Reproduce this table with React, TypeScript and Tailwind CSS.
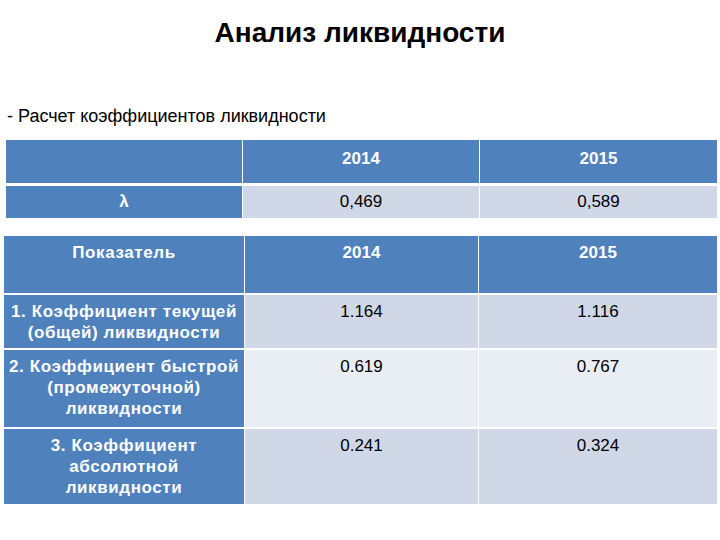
export default function App() {
  const rows = [
    { name: ["1. Коэффициент текущей", "(общей) ликвидности"], a: "1.164", b: "1.116", h: "h-[53px]", bg: "bg-[#d0d8e8]" },
    { name: ["2. Коэффициент быстрой", "(промежуточной)", "ликвидности"], a: "0.619", b: "0.767", h: "h-[77px]", bg: "bg-[#e9edf4]" },
    { name: ["3. Коэффициент", "абсолютной", "ликвидности"], a: "0.241", b: "0.324", h: "h-[75px]", bg: "bg-[#d0d8e8]" },
  ]

  return (
    <div className="w-[720px] h-[540px] bg-white font-['Liberation_Sans',Arial,sans-serif] text-black relative overflow-hidden">
      <h1 className="pt-[16px] text-center text-[28px] leading-[34px] font-bold">Анализ ликвидности</h1>

      <p className="mt-[55px] pl-[7px] text-[18px] leading-[22px]">- Расчет коэффициентов ликвидности</p>

      {/* first table */}
      <div className="mt-[13px] ml-[6px] w-[711px] grid grid-cols-[236px_236px_237px] gap-x-[1px] gap-y-[3px] text-[17px]">
        <div className="h-[43px] bg-[#4f81bd]" />
        <div className="h-[43px] bg-[#4f81bd] text-white font-bold text-center pt-[6px]">2014</div>
        <div className="h-[43px] bg-[#4f81bd] text-white font-bold text-center pt-[6px]">2015</div>
        <div className="h-[32px] bg-[#4f81bd] text-white font-bold flex items-center justify-center">λ</div>
        <div className="h-[32px] bg-[#d0d8e8] flex items-center justify-center">0,469</div>
        <div className="h-[32px] bg-[#d0d8e8] flex items-center justify-center">0,589</div>
      </div>

      {/* second table */}
      <div className="mt-[18px] ml-[4px] w-[713px] grid grid-cols-[240px_233px_238px] gap-x-[1px] gap-y-[2px] text-[17px] leading-[21px]">
        <div className="h-[57px] bg-[#4f81bd] text-white font-bold text-center pt-[6px] tracking-[0.6px]">Показатель</div>
        <div className="h-[57px] bg-[#4f81bd] text-white font-bold text-center pt-[6px]">2014</div>
        <div className="h-[57px] bg-[#4f81bd] text-white font-bold text-center pt-[6px]">2015</div>
        {rows.map((r, i) => (
          <div key={i} className="contents">
            <div className={`${r.h} bg-[#4f81bd] text-white font-bold text-center pt-[6px] tracking-[0.6px]`}>
              {r.name.map((l, j) => (
                <div key={j} className="whitespace-nowrap">{l}</div>
              ))}
            </div>
            <div className={`${r.h} ${r.bg} text-center pt-[6px]`}>{r.a}</div>
            <div className={`${r.h} ${r.bg} text-center pt-[6px]`}>{r.b}</div>
          </div>
        ))}
      </div>
    </div>
  )
}
